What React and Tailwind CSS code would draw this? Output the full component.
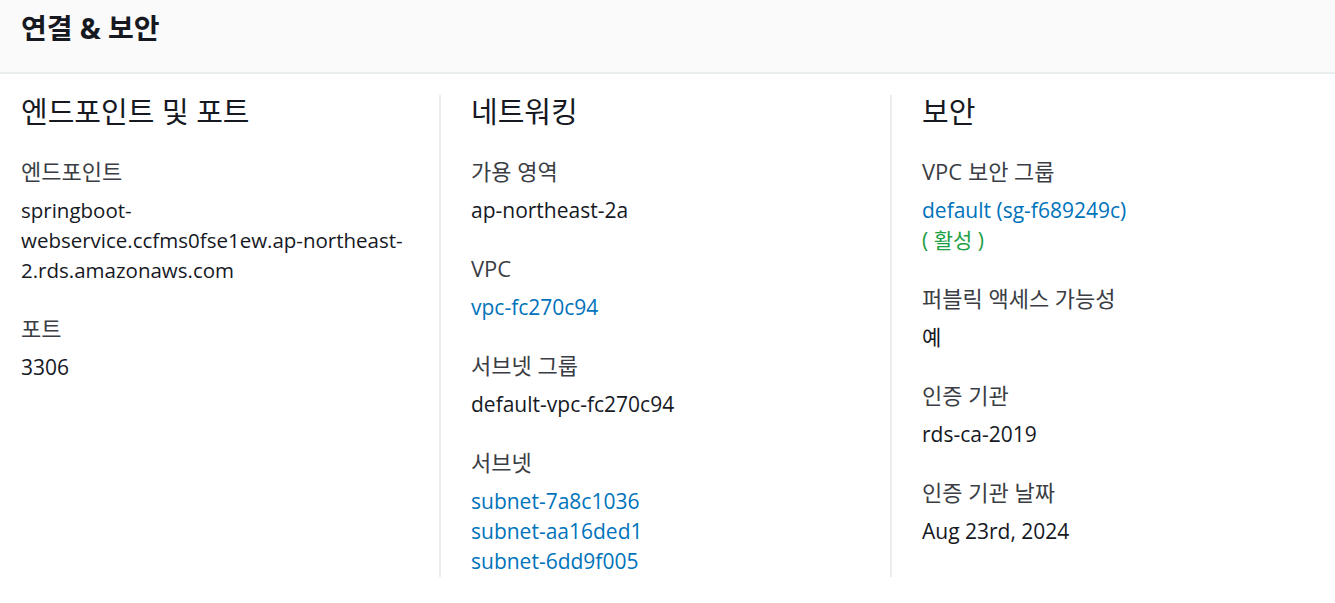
export default function App() {
  const font = { fontFamily: '"Open Sans", "Noto Sans CJK KR", sans-serif' };
  const Label = ({ children }) => (
    <div className="text-[22px] leading-[30px] text-[#3a3e44]">{children}</div>
  );
  const Value = ({ children, cls = "text-[#16191f]" }) => (
    <div className={`text-[21px] leading-[30px] ${cls}`}>{children}</div>
  );
  const Item = ({ label, children }) => (
    <div className="flex flex-col gap-[9px]">
      <Label>{label}</Label>
      <div>{children}</div>
    </div>
  );
  const Heading = ({ children }) => (
    <div className="text-[29px] leading-[34px] text-[#16191f] mb-[27px]">{children}</div>
  );
  return (
    <div className="w-[1335px] h-[603px] bg-white" style={font}>
      <div className="h-[74px] bg-[#fafafa] border-b-2 border-[#eaeded] pl-[21px] pt-[11px]">
        <div className="text-[28px] leading-[34px] font-bold text-[#16191f]">연결 &amp; 보안</div>
      </div>
      <div className="flex items-start pl-[21px] pt-[21px]">
        <div className="w-[418px] pr-[10px]">
          <Heading>엔드포인트 및 포트</Heading>
          <div className="flex flex-col gap-[28px]">
            <Item label="엔드포인트">
              <div className="text-[20.5px] leading-[30px] text-[#16191f]">
                springboot-
                <br />
                webservice.ccfms0fse1ew.ap-northeast-
                <br />
                2.rds.amazonaws.com
              </div>
            </Item>
            <Item label="포트">
              <Value>3306</Value>
            </Item>
          </div>
        </div>
        <div className="w-[451px] border-l-2 border-[#eaeded] pl-[30px] pb-[1px]">
          <Heading>네트워킹</Heading>
          <div className="flex flex-col gap-[28px]">
            <Item label="가용 영역">
              <Value>ap-northeast-2a</Value>
            </Item>
            <Item label="VPC">
              <Value cls="text-[#0073bb]">vpc-fc270c94</Value>
            </Item>
            <Item label="서브넷 그룹">
              <Value>default-vpc-fc270c94</Value>
            </Item>
            <Item label="서브넷">
              <Value cls="text-[#0073bb]">subnet-7a8c1036</Value>
              <Value cls="text-[#0073bb]">subnet-aa16ded1</Value>
              <Value cls="text-[#0073bb]">subnet-6dd9f005</Value>
            </Item>
          </div>
        </div>
        <div className="flex-1 self-stretch border-l-2 border-[#eaeded] pl-[30px]">
          <Heading>보안</Heading>
          <div className="flex flex-col gap-[28px]">
            <Item label="VPC 보안 그룹">
              <Value cls="text-[#0073bb]">default (sg-f689249c)</Value>
              <Value cls="text-[#1d9f45]">( 활성 )</Value>
            </Item>
            <Item label="퍼블릭 액세스 가능성">
              <Value>예</Value>
            </Item>
            <Item label="인증 기관">
              <Value>rds-ca-2019</Value>
            </Item>
            <Item label="인증 기관 날짜">
              <Value>Aug 23rd, 2024</Value>
            </Item>
          </div>
        </div>
      </div>
    </div>
  );
}
